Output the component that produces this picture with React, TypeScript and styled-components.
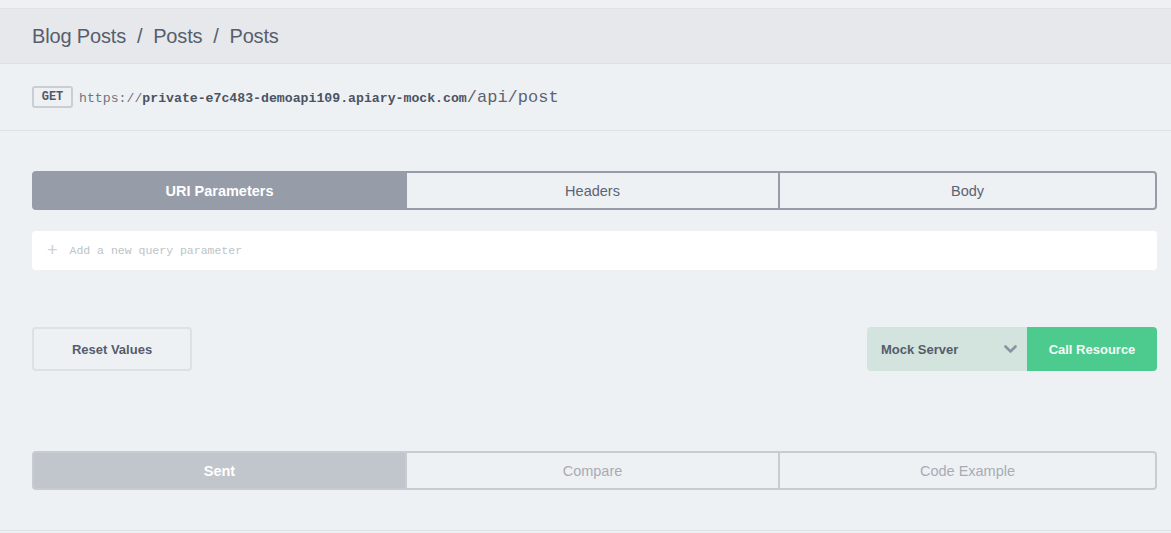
import styled, { createGlobalStyle } from 'styled-components';

const GlobalStyle = createGlobalStyle`
  html, body {
    margin: 0;
    padding: 0;
    background: #eef1f4;
    font-family: "Liberation Sans", Arial, sans-serif;
  }
`;

const primaryTabs = ['URI Parameters', 'Headers', 'Body'];
const resultTabs = ['Sent', 'Compare', 'Code Example'];

function App() {
  return (
    <>
      <GlobalStyle />
      <StyledPage>
        <StyledBreadcrumb>Blog Posts&nbsp; / &nbsp;Posts&nbsp; / &nbsp;Posts</StyledBreadcrumb>
        <StyledUrlRow>
          <StyledMethod>GET</StyledMethod>
          <StyledUrl>
            <span>https://</span>
            <StyledHost>private-e7c483-demoapi109.apiary-mock.com</StyledHost>
            <StyledPath>/api/post</StyledPath>
          </StyledUrl>
        </StyledUrlRow>
        <StyledContent>
          <StyledTabs>
            {primaryTabs.map((t, i) => (
              <StyledTab key={t} $active={i === 0} $tone="dark">
                {t}
              </StyledTab>
            ))}
          </StyledTabs>
          <StyledParamInput>
            <StyledPlus>+</StyledPlus>
            <span>Add a new query parameter</span>
          </StyledParamInput>
          <StyledActions>
            <StyledResetButton>Reset Values</StyledResetButton>
            <StyledCallGroup>
              <StyledServerSelect>
                <span>Mock Server</span>
                <svg width="13" height="9" viewBox="0 0 13 9">
                  <path d="M1.5 1.5 L6.5 6.5 L11.5 1.5" fill="none" stroke="#8a93a0" strokeWidth="2.6" strokeLinecap="round" />
                </svg>
              </StyledServerSelect>
              <StyledCallButton>Call Resource</StyledCallButton>
            </StyledCallGroup>
          </StyledActions>
          <StyledTabs $bottom>
            {resultTabs.map((t, i) => (
              <StyledTab key={t} $active={i === 0} $tone="light">
                {t}
              </StyledTab>
            ))}
          </StyledTabs>
        </StyledContent>
      </StyledPage>
    </>
  );
}

export default App;

const StyledPage = styled.div`
  padding-top: 8px;
  min-height: 533px;
  box-sizing: border-box;
`;

const StyledBreadcrumb = styled.header`
  height: 54px;
  display: flex;
  align-items: center;
  padding-left: 32px;
  background: #e6e8eb;
  border-top: 1px solid #dde3e6;
  border-bottom: 1px solid #dbe1e4;
  font-size: 20px;
  letter-spacing: -0.15px;
  color: #575e6d;
`;

const StyledUrlRow = styled.div`
  height: 66px;
  display: flex;
  align-items: center;
  gap: 6px;
  padding-left: 32px;
  border-bottom: 1px solid #dbe1e4;
`;

const StyledMethod = styled.span`
  box-sizing: border-box;
  height: 22px;
  width: 41px;
  display: flex;
  align-items: center;
  justify-content: center;
  border: 2px solid #c9ced4;
  border-radius: 3px;
  font-family: "Liberation Mono", monospace;
  font-weight: bold;
  font-size: 12px;
  color: #525968;
`;

const StyledUrl = styled.span`
  font-family: "Liberation Mono", monospace;
  font-size: 13.2px;
  color: #6e7583;
  display: flex;
  align-items: baseline;
`;

const StyledHost = styled.span`
  font-weight: bold;
  color: #4c5362;
`;

const StyledPath = styled.span`
  font-size: 17px;
  color: #5d6473;
`;

const StyledContent = styled.main`
  padding: 40px 14px 40px 32px;
  border-bottom: 1px solid #dbe1e4;
`;

const StyledTabs = styled.div<{ $bottom?: boolean }>`
  display: grid;
  grid-template-columns: 375px 373px 1fr;
  height: 39px;
  margin-top: ${p => (p.$bottom ? '80px' : '0')};
`;

const StyledTab = styled.div<{ $active: boolean; $tone: 'dark' | 'light' }>`
  box-sizing: border-box;
  display: flex;
  align-items: center;
  justify-content: center;
  font-size: 14.5px;
  font-weight: ${p => (p.$active ? 'bold' : 'normal')};
  color: ${p => (p.$active ? '#ffffff' : p.$tone === 'dark' ? '#5c6372' : '#a7acb4')};
  background: ${p => (p.$active ? (p.$tone === 'dark' ? '#979ca9' : '#c1c5cc') : '#eef1f4')};
  border: 2px solid ${p => (p.$tone === 'dark' ? '#979ca9' : '#c8ccd2')};
  border-left-width: 0;
  &:first-child {
    border-left-width: 2px;
    border-radius: 4px 0 0 4px;
  }
  &:last-child {
    border-radius: 0 4px 4px 0;
  }
`;

const StyledParamInput = styled.div`
  margin-top: 21px;
  height: 39px;
  background: #ffffff;
  border-radius: 4px;
  display: flex;
  align-items: center;
  gap: 12px;
  padding-left: 15px;
  font-family: "Liberation Mono", monospace;
  font-size: 11.5px;
  color: #bcc3c8;
`;

const StyledPlus = styled.span`
  font-family: "Liberation Sans", sans-serif;
  font-size: 18px;
  font-weight: 300;
  color: #ccd2d6;
`;

const StyledActions = styled.div`
  margin-top: 57px;
  display: flex;
  justify-content: space-between;
  align-items: center;
`;

const StyledResetButton = styled.button`
  box-sizing: border-box;
  width: 160px;
  height: 44px;
  background: #eef1f4;
  border: 2px solid #dde1e5;
  border-radius: 4px;
  font-family: "Liberation Sans", Arial, sans-serif;
  font-size: 13px;
  font-weight: bold;
  color: #555c6b;
`;

const StyledCallGroup = styled.div`
  display: flex;
  height: 44px;
  border-radius: 4px;
  overflow: hidden;
`;

const StyledServerSelect = styled.div`
  width: 160px;
  box-sizing: border-box;
  display: flex;
  align-items: center;
  justify-content: space-between;
  padding: 0 10px 0 14px;
  background: #d3e3de;
  font-size: 13px;
  font-weight: bold;
  color: #555c6b;
`;

const StyledCallButton = styled.button`
  width: 130px;
  border: none;
  background: #4dcb8f;
  font-family: "Liberation Sans", Arial, sans-serif;
  font-size: 13px;
  font-weight: bold;
  color: #f2fbf6;
`;
